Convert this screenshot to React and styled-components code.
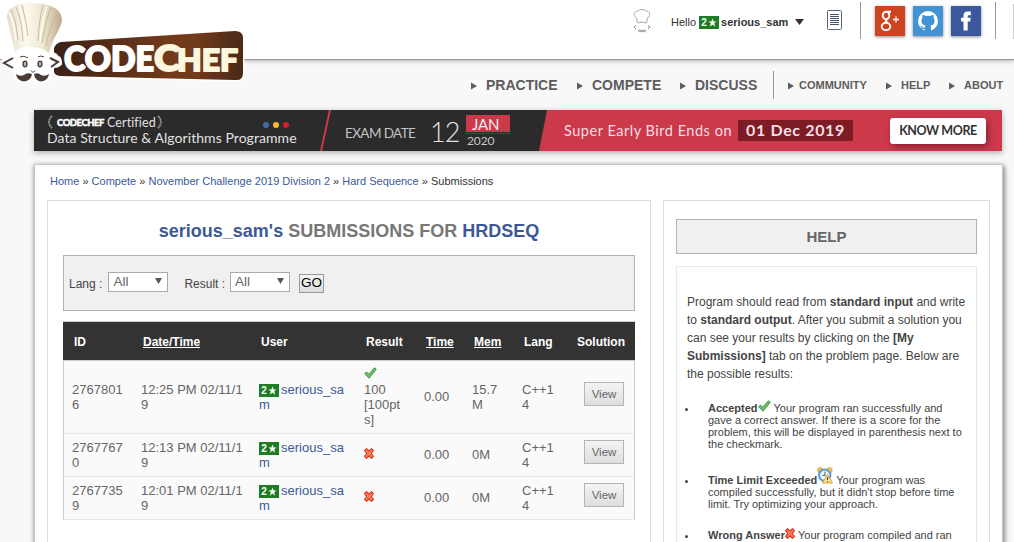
import React from "react";
import styled, { createGlobalStyle } from "styled-components";

const Global = createGlobalStyle`
  * { box-sizing: border-box; }
  html, body { margin: 0; padding: 0; height: 542px; overflow: hidden; background: #f8f8f8; }
  body { font-family: "Liberation Sans", Arial, sans-serif; color: #444; font-size: 12px; }
  a { color: #3b5998; text-decoration: none; }
`;

const Page = styled.div`
  width: 1014px;
  height: 542px;
  overflow: hidden;
  background: #f8f8f8;
`;
const Header = styled.header`
  height: 59px;
  background: #fff;
  box-shadow: 0 1px 1px #999, 0 2px 5px rgba(0, 0, 0, 0.25);
  display: flex;
  align-items: flex-start;
  position: relative;
`;
const LogoLink = styled.div`
  width: 633px;
  height: 59px;
  flex: none;
  svg { display: block; overflow: visible; }
`;
const ChefMark = styled.svg`
  margin: 9px 20px 0 0;
  flex: none;
`;
const Greeting = styled.div`
  display: flex;
  align-items: center;
  height: 15px;
  margin-top: 14px;
  width: 156px;
  flex: none;
  font-size: 11px;
  color: #333;
  b { letter-spacing: 0; margin-left: 2px; }
`;
const Badge = styled.span`
  display: inline-flex;
  align-items: center;
  justify-content: center;
  gap: 1px;
  width: 20px;
  height: 13px;
  background: #1e7d22;
  color: #fff;
  font-size: 10px;
  line-height: 13px;
  font-weight: bold;
  margin: ${(p) => (p.$cell ? "2px 2px 0 0" : "1px 0 0 3px")};
`;
const Caret = styled.span`
  display: flex;
  margin-left: 7px;
`;
const DocSvg = styled.svg`
  flex: none;
  margin-top: 10px;
`;
const Rule = styled.i`
  flex: none;
  width: 1px;
  height: ${(p) => p.$h}px;
  background: #999;
  margin: ${(p) => p.$m};
`;
const Social = styled.div`
  width: 30px;
  height: 30px;
  margin: 6px 8px 0 0;
  flex: none;
  background: ${(p) => p.$bg};
  box-shadow: 0 1px 3px rgba(0, 0, 0, 0.45);
  svg { display: block; }
`;
const EdgeButton = styled.div`
  width: 20px;
  height: 35px;
  margin: 4px 0 0 17px;
  flex: none;
  border: 1px solid #ccc;
`;

const Nav = styled.nav`
  height: 51px;
  display: flex;
  align-items: center;
  padding: 1px 0 0 471px;
  font-weight: bold;
  color: #5d5d5d;
  white-space: nowrap;
`;
const NavItem = styled.span`
  display: flex;
  align-items: center;
  font-size: ${(p) => (p.$small ? 11 : 14)}px;
  width: ${(p) => p.$w}px;
  flex: none;
  svg { margin: ${(p) => (p.$small ? "1px" : "2px")} ${(p) => p.$gap}px 0 0; flex: none; }
`;

const Banner = styled.section`
  width: 968px;
  height: 41px;
  margin-left: 34px;
  display: flex;
  background: #2b2b2b;
  color: #e2e2e2;
  font-family: Lato, sans-serif;
  box-shadow: 0 2px 6px rgba(0, 0, 0, 0.3);
  white-space: nowrap;
`;
const Programme = styled.div`
  width: 286px;
  padding: 4px 0 0 13px;
`;
const CertLine = styled.div`
  display: flex;
  align-items: center;
  height: 16px;
  font-size: 12.5px;
  letter-spacing: 0.1px;
`;
const CertBrand = styled.b`
  font-size: 9.5px;
  font-weight: 900;
  color: #fff;
  letter-spacing: -0.48px;
  margin: 1px 4px 0 4px;
  width: 46px;
  -webkit-text-stroke: 0.4px #fff;
`;
const Dots = styled.div`
  display: flex;
  gap: 4px;
  margin: 6px 0 0 100px;
`;
const Dot = styled.i`
  width: 6px;
  height: 6px;
  border-radius: 50%;
  background: ${(p) => p.$c};
`;
const ProgName = styled.div`
  font-size: 14px;
  line-height: 15px;
  letter-spacing: 0.06px;
`;
const Slash = styled.i`
  width: 11px;
  height: 41px;
  background: #cc394b;
  clip-path: polygon(9px 0, 11px 0, 2px 41px, 0 41px);
`;
const Exam = styled.div`
  width: 208px;
  display: flex;
  padding-left: 14px;
`;
const ExamLabel = styled.span`
  font-size: 13.5px;
  line-height: 17px;
  letter-spacing: -0.6px;
  margin-top: 15px;
  width: 85px;
  color: #c4c4c4;
`;
const ExamDay = styled.span`
  font-size: 27px;
  line-height: 32px;
  letter-spacing: -0.8px;
  margin-top: 6px;
  width: 36px;
  font-weight: 300;
`;
const ExamMonth = styled.div`
  width: 44px;
  span {
    display: block;
    height: 17px;
    margin-top: 5px;
    background: #cc394b;
    color: #eee;
    font-size: 15px;
    line-height: 18px;
    letter-spacing: -0.2px;
    padding-left: 6px;
  }
  em {
    display: block;
    font-style: normal;
    font-size: 12px;
    line-height: 14px;
    letter-spacing: -0.1px;
    margin-top: 1px;
    padding-left: 1px;
    border-top: 1px solid #7d2d37;
    color: #c8c8c8;
  }
`;
const Offer = styled.div`
  width: 463px;
  height: 41px;
  display: flex;
  align-items: center;
  padding-left: 25px;
  background: #cc394b;
  clip-path: polygon(8px 0, 100% 0, 100% 100%, 0 100%);
  color: #f5dfe2;
`;
const OfferText = styled.span`
  width: 174px;
  font-size: 14.5px;
  letter-spacing: 0.52px;
  margin-top: -1px;
`;
const OfferDate = styled.span`
  width: 115px;
  height: 21px;
  line-height: 20px;
  background: #7d1c25;
  text-align: center;
  font-size: 16px;
  font-weight: bold;
  letter-spacing: 0.65px;
  margin: -1px 37px 0 0;
`;
const Know = styled.span`
  width: 96px;
  height: 26px;
  line-height: 26px;
  border-radius: 3px;
  background: #fff;
  color: #333;
  font-size: 12.5px;
  font-weight: bold;
  text-align: center;
  letter-spacing: -0.4px;
  box-shadow: 2px 3px 6px rgba(0, 0, 0, 0.35);
`;

const Card = styled.main`
  width: 969px;
  height: 400px;
  margin: 13px 0 0 34px;
  border: 1px solid #c6c6c6;
  background: #fff;
  box-shadow: 2px 2px 5px rgba(0, 0, 0, 0.4), -1px 1px 5px rgba(0, 0, 0, 0.2);
  padding: 0 12px;
`;
const Crumbs = styled.div`
  height: 35px;
  line-height: 13px;
  padding: 10px 0 0 3px;
  font-size: 11px;
  color: #333;
`;
const Columns = styled.div`
  display: flex;
  gap: 12px;
`;
const Panel = styled.section`
  width: ${(p) => p.$w}px;
  height: 390px;
  border: 1px solid #ddd;
  padding: ${(p) => p.$p};
`;
const Title = styled.h1`
  margin: 0 0 13px;
  font-size: 18px;
  line-height: 21px;
  font-weight: bold;
  color: #777;
  text-align: center;
`;
const Filters = styled.div`
  height: 56px;
  border: 1px solid #b2b2b2;
  background: #f0f0f0;
  display: flex;
  align-items: center;
  padding-left: 5px;
  margin-bottom: 10px;
  color: #444;
  span { margin-top: 1px; }
`;
const Select = styled.div`
  display: flex;
  align-items: center;
  justify-content: space-between;
  width: 60px;
  height: 20px;
  border: 1px solid #aaa;
  background: #fff;
  color: #666;
  font-size: 13.5px;
  padding: 0 5px 1px 4px;
  margin: -2px ${(p) => p.$mr}px 0 ${(p) => p.$ml}px;
  svg { margin-top: -1px; }
`;
const Go = styled.button`
  width: 25px;
  height: 19px;
  padding: 0;
  border: 1px solid #999;
  background: linear-gradient(#f4f4f4, #ddd);
  font: 13.5px/16px "Liberation Sans", Arial, sans-serif;
  color: #000;
`;
const Table = styled.table`
  width: 572px;
  table-layout: fixed;
  border-collapse: separate;
  border-spacing: 0;
  color: #666;
  font-size: 13px;
  line-height: 15px;
  th {
    height: 40px;
    background: #333;
    border-top: 1px solid #ccc;
    border-bottom: 1px solid #ccc;
    color: #fff;
    font-size: 12px;
    text-align: left;
    padding: 2px 0 0 11px;
  }
  td { padding: 0 0 0 9px; background: #fafafa; border-bottom: 1px solid #e8e8e8; white-space: nowrap; }
  td:first-child { border-left: 1px solid #ccc; padding-left: 8px; }
  td:nth-child(5) { padding-bottom: 2px; }
  td:last-child { border-right: 1px solid #ccc; padding-left: 18px; }
`;
const Row = styled.tr`
  height: ${(p) => p.$h}px;
`;
const Line = styled.div`
  height: 15px;
  display: flex;
  align-items: center;
  margin: ${(p) => p.$m || 0};
`;
const Mem = styled.div`
  margin-top: ${(p) => (p.$single ? -2 : 0)}px;
`;
const View = styled.button`
  display: block;
  width: 40px;
  height: 24px;
  margin-top: -6px;
  padding: 0;
  border: 1px solid #b5b5b5;
  background: linear-gradient(#f4f4f4, #dedede);
  color: #666;
  font: 11.5px "Liberation Sans", Arial, sans-serif;
`;
const HelpHead = styled.h2`
  height: 35px;
  margin: 0 0 12px;
  border: 1px solid #b2b2b2;
  background: #f0f0f0;
  color: #666;
  font-size: 15px;
  line-height: 33px;
  text-align: center;
`;
const HelpBody = styled.div`
  height: 320px;
  border: 1px solid #e8e8e8;
  padding: 26px 0 0 10px;
  color: #444;
  white-space: nowrap;
  p { margin: 0 0 19px; line-height: 18px; font-size: 12px; }
`;
const Item = styled.div`
  display: flex;
  font-size: 11px;
  line-height: 12px;
  margin-bottom: ${(p) => p.$mb}px;
  &::before {
    content: "";
    width: 3px;
    height: 3px;
    border-radius: 50%;
    background: #444;
    margin: 6px 20px 0 -2px;
  }
`;
const First = styled.div`
  display: flex;
  align-items: center;
  height: 12px;
  svg { margin: -${(p) => p.$lift}px 3px 0 0; flex: none; }
`;

const Logo = () => (
  <svg width="260" height="90" viewBox="0 0 260 90">
    <defs>
      <linearGradient id="board"><stop offset="0" stopColor="#3b2115" /><stop offset=".6" stopColor="#713a1b" /><stop offset=".75" stopColor="#713a1b" /><stop offset="1" stopColor="#4b2918" /></linearGradient>
      <linearGradient id="hat"><stop offset="0" stopColor="#e4dcc8" /><stop offset=".35" stopColor="#fcf9ee" /><stop offset=".65" stopColor="#eee6d2" /><stop offset="1" stopColor="#bcaa88" /></linearGradient>
    </defs>
    <path d="M61 42 L235 31 Q243 31 243 38 V73 Q243 81 235 80 L60 76 Q53 75 54 70 V48 Q56 43 61 42Z" fill="url(#board)" stroke="#fff" strokeWidth="3" paintOrder="stroke" />
    <path d="M15 48 L7 17 C6 6 20 2 32 3 C48 2 62 7 62 20 C61 30 54 35 50 52 Q57 54 58 57 Q61 57 61 64 Q58 67 54 67 Q52 72 49 74 Q52 81 44 82 Q36 84 33 79 Q28 84 20 82 Q14 80 16 74 Q13 71 12 67 Q3 66 2 61 Q5 57 13 57Z" fill="#fff" stroke="#fff" strokeWidth="2" />
    <path d="M14 48 L7 18 C6 8 17 3 31 3 C48 3 62 8 62 20 C61 30 52 38 49 53 Q41 46 30 47 Q20 47 15 52Z" fill="url(#hat)" />
    <g fill="none" stroke="#c4b799" strokeWidth=".9">
      <path d="M11 10 Q16 20 18 40M16 7 Q22 20 23 41M22 5 Q26 20 28 36M43 5 Q39 20 38 41M51 8 Q45 22 42 43M57 14 Q49 28 46 46" />
    </g>
    <path d="M9 12 Q14 22 16 40M19 6 Q24 20 26 42M47 6 Q42 22 40 42" fill="none" stroke="#fffdf4" strokeWidth="1.500" />
    <path d="M20 57 Q24 55 28 58M38 57 Q41 55 44 57" fill="none" stroke="#59443a" strokeWidth="1" />
    <path d="M13 58 L4 63 L13 68 M50 58 L58 62 L51 67" fill="none" stroke="#4b3b34" strokeWidth="2" />
    <ellipse cx="25" cy="64" rx="2" ry="2.800" fill="#b8b0aa" stroke="#4b3b34" strokeWidth="1.300" />
    <ellipse cx="40" cy="64" rx="2" ry="2.800" fill="#b8b0aa" stroke="#4b3b34" strokeWidth="1.300" />
    <path d="M31 70.500 L33 72.500 L35 70.500" fill="none" stroke="#4b3b34" />
    <path d="M32 74 Q27 72 24 75 Q20 77 16 74 Q17 81 24 81.500 Q31 81 32 74ZM34 74 Q38 72 41 75 Q45 77 49 74 Q48 81 41 81.500 Q35 81 34 74Z" fill="#4b3b34" />
    <g fontFamily="Lato, sans-serif" fontWeight="900" fontSize="34" strokeWidth="1.900" strokeLinejoin="round">
      <text x="64" y="70.500" textLength="90" lengthAdjust="spacingAndGlyphs" fill="#fff" stroke="#fff">CODE</text>
      <text x="154" y="71" fontSize="36" textLength="26" lengthAdjust="spacingAndGlyphs" fill="#fbf6dc" stroke="#fbf6dc">C</text>
      <text x="177" y="70.500" textLength="61" lengthAdjust="spacingAndGlyphs" fontSize="31" fill="#fbf6dc" stroke="#fbf6dc">HEF</text>
    </g>
  </svg>
);

const Star = () => (
  <svg width="9" height="9" viewBox="0 0 24 24"><path fill="#fff" d="M12 1l3 8h8l-6.500 5 2.500 9-7-5.500L5 23l2.500-9L1 9h8z" /></svg>
);
const Rating = ({ cell }) => <Badge $cell={cell}>2<Star /></Badge>;
const Arrow = () => <svg width="6" height="8"><path d="M0 .5L6 4L0 7.500Z" fill="#5d5d5d" /></svg>;
const Down = ({ w = 7, h = 6, c = "#555" }) => <svg width={w} height={h} viewBox="0 0 10 8" preserveAspectRatio="none"><path d="M0 0H10L5 8Z" fill={c} /></svg>;
const DocIcon = () => (
  <DocSvg width="16" height="21" viewBox="0 0 16 21">
    <rect x=".5" y=".5" width="14" height="19" rx="1" fill="#fff" stroke="#5a6478" />
    <path d="M3 4.500H12M3 6.500H12M3 8.500H12M3 10.500H12M3 12.500H12M3 14.500H12" stroke="#44546e" />
  </DocSvg>
);
const Check = () => (
  <svg width="13" height="12" viewBox="0 0 13 12"><path d="M.7 6.500L2.700 5 4.700 7.200 10.500.8 12.300 2.200 5 11.200Z" fill="#6cc06a" stroke="#3b8a3b" strokeWidth=".9" strokeLinejoin="round" /></svg>
);
const Cross = () => (
  <svg width="10" height="11" viewBox="0 0 11 11" preserveAspectRatio="none"><path d="M2.700.6L5.500 3 8.300.6 10.400 2.700 8 5.500 10.400 8.300 8.300 10.400 5.500 8 2.700 10.400.6 8.300 3 5.500.6 2.700Z" fill="#fb7a58" stroke="#d5331a" strokeWidth="1.100" strokeLinejoin="round" /></svg>
);
const Clock = () => (
  <svg width="16" height="17" viewBox="0 0 16 17">
    <circle cx="3.200" cy="3.200" r="2.700" fill="#f3c64e" stroke="#d09a2c" strokeWidth=".7" /><circle cx="12.500" cy="3.200" r="2.700" fill="#f3c64e" stroke="#d09a2c" strokeWidth=".7" />
    <circle cx="7.700" cy="8.300" r="5.700" fill="#eef6fc" stroke="#5c9bd5" strokeWidth="2" />
    <path d="M8 4.500V8.500H5.500" stroke="#557" fill="none" />
    <path d="M10.500 7.500L15.500 16H5.500Z" fill="#fde08a" stroke="#e09a3a" strokeLinejoin="round" /><path d="M10.500 10V13M10.500 14V15" stroke="#443" />
  </svg>
);

const rows = [
  { id: ["2767801", "6"], t: "12:25", ok: true, mem: ["15.7", "M"], h: 73 },
  { id: ["2767767", "0"], t: "12:13", mem: ["0M"], h: 43 },
  { id: ["2767735", "9"], t: "12:01", mem: ["0M"], h: 43 },
];
const crumbs = ["Home", "Compete", "November Challenge 2019 Division 2", "Hard Sequence"];

export default function App() {
  return (
    <Page>
      <Global />
      <Header>
        <LogoLink><Logo /></LogoLink>
        <ChefMark width="18" height="25" viewBox="0 0 18 25" fill="none" stroke="#aaa">
          <path d="M4.500 14L3.500 9C-.5 6 1 2 5 2C7 0 11 0 13 2C17 2 18 6 14.500 9L13.500 14Q9 12 4.500 14Z" />
          <path d="M3 16.500L1 18 3 20M15 16.500L17 18 15 20" stroke="#888" />
          <path d="M5 21.500Q7 20.500 9 21.500 11 20.500 13 21.500 12 23.500 9 22.500 6 23.500 5 21.500Z" fill="#aaa" />
        </ChefMark>
        <Greeting>Hello <Rating /><b>serious_sam</b><Caret><Down w={9} h={6} c="#333" /></Caret></Greeting>
        <DocIcon />
        <Rule $h={37} $m="2px 14px 0 17px" />
        <Social $bg="#cf4420">
          <svg width="30" height="30" viewBox="0 0 30 30" fill="none" stroke="#fff" strokeWidth="1.900">
            <ellipse cx="11" cy="9.500" rx="3.300" ry="3.700" /><path d="M11.500 5.700H16M13 12.700C10 14 10 15.300 12.500 16.300" />
            <ellipse cx="11" cy="20.500" rx="4.300" ry="3.700" /><path d="M18 13.500H24M21 10.500V16.500" strokeWidth="1.300" />
          </svg>
        </Social>
        <Social $bg="#4392d4">
          <svg width="30" height="30" viewBox="0 0 30 30">
            <circle cx="15" cy="15" r="10" fill="#fff" />
            <path d="M9.500 9Q11.500 9 12.500 10Q15 9.500 17.500 10Q18.500 9 20.500 9Q21 10.500 20.700 12Q22 13.500 21.500 16Q21 19 17.500 19.500Q18 20.500 18 21.500V25.500H12V23Q9.500 23.500 8.500 21.500Q8 20.500 7.500 20Q9 19.700 9.700 21Q10.500 22 12 21.500Q12 20.300 12.500 19.500Q9 19 8.500 16Q8 13.500 9.300 12Q9 10.500 9.500 9Z" fill="#4392d4" />
          </svg>
        </Social>
        <Social $bg="#3b579d">
          <svg width="30" height="30" viewBox="0 0 30 30"><path fill="#fff" d="M12.500 24.500V15.500H10V11.800H12.500V9.500Q12.500 5.500 16.500 5.500H19.800V9.200H17.800Q16.700 9.200 16.700 10.200V11.800H19.700L19.200 15.500H16.700V24.500Z" /></svg>
        </Social>
        <Rule $h={37} $m="2px 0 0 6px" />
        <EdgeButton />
      </Header>
      <Nav>
        <NavItem $w={106} $gap={9}><Arrow />PRACTICE</NavItem>
        <NavItem $w={103} $gap={9}><Arrow />COMPETE</NavItem>
        <NavItem $w={93} $gap={9}><Arrow />DISCUSS</NavItem>
        <Rule $h={28} $m="0 14px 0 0" />
        <NavItem $small $w={98} $gap={5}><Arrow />COMMUNITY</NavItem>
        <NavItem $small $w={63} $gap={9}><Arrow />HELP</NavItem>
        <NavItem $small $w={60} $gap={9}><Arrow />ABOUT</NavItem>
      </Nav>
      <Banner>
        <Programme>
          <CertLine>
            <svg width="6" height="14" viewBox="0 0 6 14"><path d="M5 1Q-1 7 5 13" fill="none" stroke="#888" strokeWidth="2" strokeDasharray="2.500 .5" /></svg>
            <CertBrand>CODECHEF</CertBrand>Certified
            <svg width="7" height="14" viewBox="-1 0 7 14"><path d="M1 1Q7 7 1 13" fill="none" stroke="#888" strokeWidth="2" strokeDasharray="2.500 .5" /></svg>
            <Dots><Dot $c="#4268b2" /><Dot $c="#fbb829" /><Dot $c="#cf1f2b" /></Dots>
          </CertLine>
          <ProgName>Data Structure &amp; Algorithms Programme</ProgName>
        </Programme>
        <Slash />
        <Exam>
          <ExamLabel>EXAM DATE</ExamLabel>
          <ExamDay>12</ExamDay>
          <ExamMonth><span>JAN</span><em>2020</em></ExamMonth>
        </Exam>
        <Offer>
          <OfferText>Super Early Bird Ends on</OfferText>
          <OfferDate>01 Dec 2019</OfferDate>
          <Know>KNOW MORE</Know>
        </Offer>
      </Banner>
      <Card>
        <Crumbs>
          {crumbs.map((c) => <React.Fragment key={c}><a>{c}</a> » </React.Fragment>)}
          Submissions
        </Crumbs>
        <Columns>
          <Panel $w={604} $p="20px 15px 0">
            <Title><a>serious_sam's</a> SUBMISSIONS FOR <a>HRDSEQ</a></Title>
            <Filters>
              <span>Lang :</span><Select $ml={6} $mr={16}>All<Down /></Select>
              <span>Result :</span><Select $ml={5} $mr={9}>All<Down /></Select>
              <Go>GO</Go>
            </Filters>
            <Table>
              <colgroup>{[69, 118, 105, 60, 48, 50, 53, 69].map((w, i) => <col key={i} width={w} />)}</colgroup>
              <thead><tr><th>ID</th><th><u>Date/Time</u></th><th>User</th><th>Result</th><th><u>Time</u></th><th><u>Mem</u></th><th>Lang</th><th>Solution</th></tr></thead>
              <tbody>
                {rows.map((r) => (
                  <Row key={r.t} $h={r.h}>
                    <td>{r.id[0]}<br />{r.id[1]}</td>
                    <td>{r.t} PM 02/11/1<br />9</td>
                    <td><Line><Rating cell /><a>serious_sa</a></Line><a>m</a></td>
                    <td>{r.ok ? <><Line $m="-2px 0 1px"><Check /></Line>100<br />[100pt<br />s]</> : <Line $m="-4px 0 0"><Cross /></Line>}</td>
                    <td>0.00</td>
                    <td>{r.mem.map((m) => <Mem key={m} $single={r.mem.length === 1}>{m}</Mem>)}</td>
                    <td>C++1<br />4</td>
                    <td><View>View</View></td>
                  </Row>
                ))}
              </tbody>
            </Table>
          </Panel>
          <Panel $w={327} $p="18px 12px 0">
            <HelpHead>HELP</HelpHead>
            <HelpBody>
              <p>
                Program should read from <b>standard input</b> and write<br />
                to <b>standard output</b>. After you submit a solution you<br />
                can see your results by clicking on the <b>[My<br />
                Submissions]</b> tab on the problem page. Below are<br />
                the possible results:
              </p>
              <Item $mb={24}><div><First $lift={4}><b>Accepted</b><Check />Your program ran successfully and</First>gave a correct answer. If there is a score for the<br />problem, this will be displayed in parenthesis next to<br />the checkmark.</div></Item>
              <Item $mb={19}><div><First $lift={9}><b>Time Limit Exceeded</b><Clock />Your program was</First>compiled successfully, but it didn't stop before time<br />limit. Try optimizing your approach.</div></Item>
              <Item $mb={0}><div><First $lift={4}><b>Wrong Answer</b><Cross />Your program compiled and ran</First></div></Item>
            </HelpBody>
          </Panel>
        </Columns>
      </Card>
    </Page>
  );
}
